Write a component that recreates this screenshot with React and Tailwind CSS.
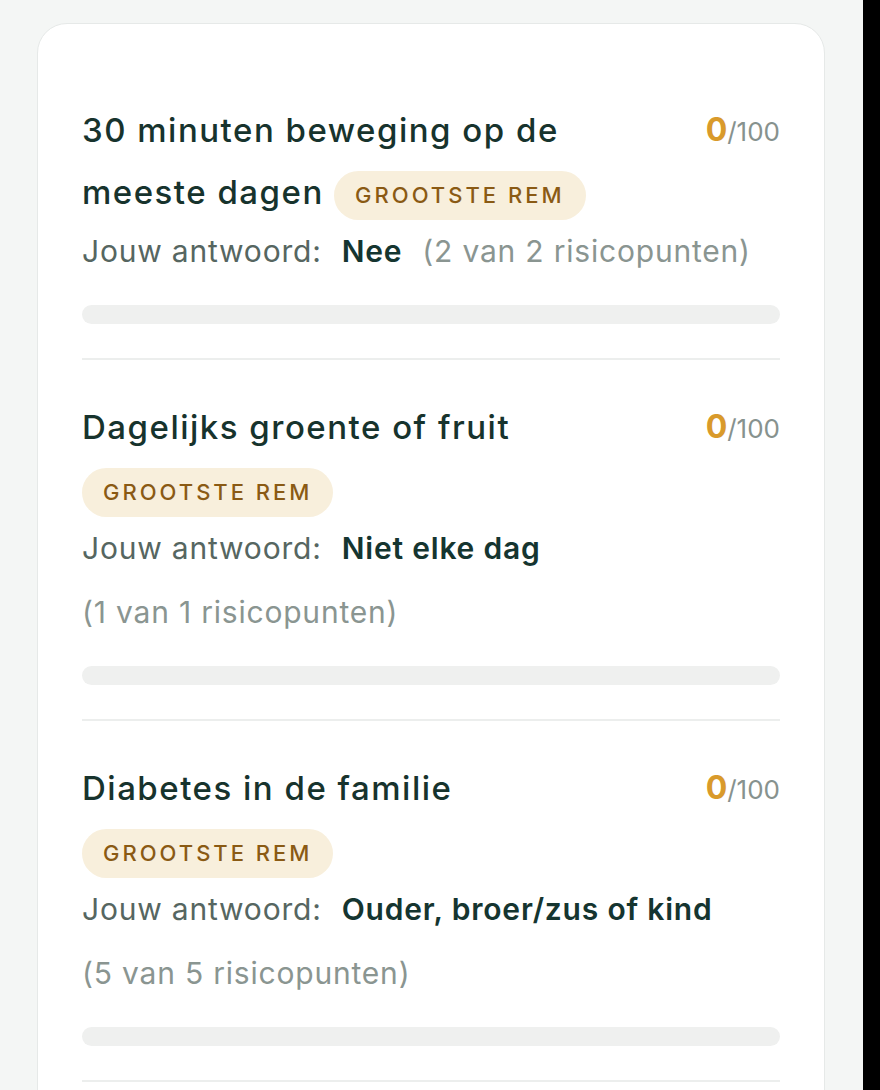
const items = [
  {
    title: "30 minuten beweging op de meeste dagen",
    answer: "Nee",
    points: "(2 van 2 risicopunten)",
  },
  {
    title: "Dagelijks groente of fruit",
    answer: "Niet elke dag",
    points: "(1 van 1 risicopunten)",
  },
  {
    title: "Diabetes in de familie",
    answer: "Ouder, broer/zus of kind",
    points: "(5 van 5 risicopunten)",
  },
];

const Badge = () => (
  <span className="inline-block align-middle rounded-full bg-[#f8efdc] px-[21px] py-[9px] text-[22px] leading-[31px] font-medium tracking-[3px] text-[#8a5a14]">
    GROOTSTE REM
  </span>
);

const Item = ({ item }) => (
  <div className="border-b-2 border-[#eceeed] pt-[36px] pb-[34px]">
    <div className="flex items-start justify-between gap-[24px]">
      <div className="flex-1 text-[33px] leading-[62px] font-medium tracking-[1.5px] text-[#17332d]">
        {item.title} <Badge />
      </div>
      <div className="leading-[62px] whitespace-nowrap">
        <span className="text-[32px] font-bold text-[#d99a2b]">0</span>
        <span className="text-[26px] text-[#87928e]">/100</span>
      </div>
    </div>
    <div className="mt-[6px] flex flex-wrap items-baseline gap-x-[20px] gap-y-[20px] text-[30px] leading-[44px] tracking-[0.8px]">
      <span className="text-[#566661]">Jouw antwoord:</span>
      <span className="font-semibold text-[#153530]">{item.answer}</span>
      <span className="text-[#8a9591]">{item.points}</span>
    </div>
    <div className="mt-[32px] h-[19px] rounded-full bg-[#eff0ef]" />
  </div>
);

export default function App() {
  return (
    <div
      className="flex min-h-[1090px] bg-[#f4f6f5]"
      style={{ fontFamily: "Inter, 'Noto Sans', sans-serif" }}
    >
      <div className="flex-1 pl-[37px] pr-[38px] pt-[23px]">
        <div className="rounded-[30px] border border-[#e6e9e8] bg-white px-[44px] pt-[39px] pb-[60px]">
          {items.map((item, i) => (
            <Item key={i} item={item} />
          ))}
        </div>
      </div>
      <div className="w-[17px] bg-black" />
    </div>
  );
}
